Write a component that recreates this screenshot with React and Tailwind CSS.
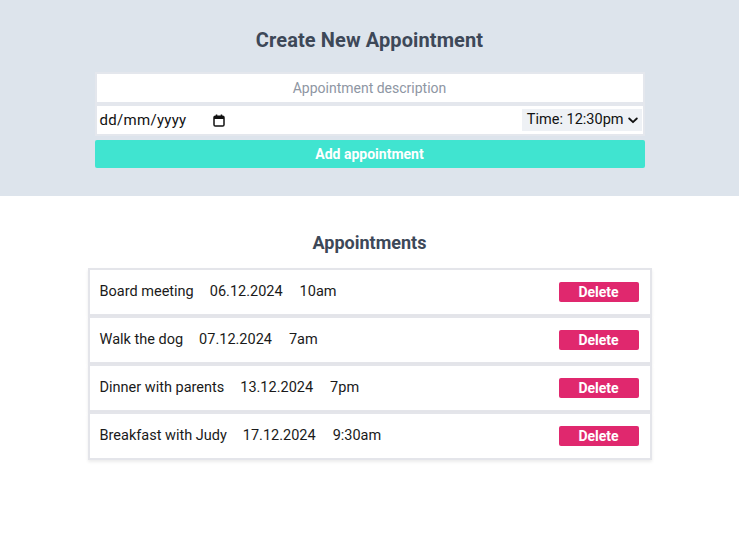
const appointments = [
  { id: 1, title: 'Board meeting', date: '06.12.2024', time: '10am' },
  { id: 2, title: 'Walk the dog', date: '07.12.2024', time: '7am' },
  { id: 3, title: 'Dinner with parents', date: '13.12.2024', time: '7pm' },
  { id: 4, title: 'Breakfast with Judy', date: '17.12.2024', time: '9:30am' }
]

const CalendarIcon = () => (
  <svg width="12" height="13" viewBox="0 0 12 13" fill="none" className="ml-[26px]">
    <rect x="1" y="2.2" width="10" height="9.8" rx="1.3" stroke="#111" strokeWidth="1.5" />
    <rect x="1" y="2.2" width="10" height="2.8" fill="#111" />
    <rect x="2.8" y="0.5" width="1.5" height="2.6" fill="#111" />
    <rect x="7.7" y="0.5" width="1.5" height="2.6" fill="#111" />
  </svg>
)

const ChevronDown = () => (
  <svg width="10" height="7" viewBox="0 0 10 7" fill="none" className="ml-[4px]">
    <path d="M1.2 1.5 5 5.2 8.8 1.5" stroke="#111" strokeWidth="1.8" strokeLinecap="round" strokeLinejoin="round" />
  </svg>
)

const App = () => {
  return (
    <div className="min-h-[536px] bg-white font-['Roboto',sans-serif]">
      <section className="flex h-[196px] flex-col items-center bg-[#dde4ec] pt-[26px]">
        <h1 className="text-[20px] font-bold leading-[28px] tracking-[0.1px] text-[#3d4858]">Create New Appointment</h1>
        <div className="mt-[18px] flex w-[550px] flex-col">
          <div className="flex h-[32px] items-center justify-center border-2 border-[#e4e7ed] bg-white text-[14px] text-[#8e96a3]">
            Appointment description
          </div>
          <div className="flex h-[32px] items-center border-2 border-[#e4e7ed] bg-white pl-[3px] pr-[1px]">
            <span className="text-[15px] tracking-[0.3px] text-[#111]">dd/mm/yyyy</span>
            <CalendarIcon />
            <div className="ml-auto flex h-[22px] items-center bg-[#eef1f5] pl-[5px] pr-[4px] text-[14.5px] text-[#111]">
              Time: 12:30pm
              <ChevronDown />
            </div>
          </div>
          <button className="mt-[4px] h-[28px] w-full rounded-[2px] bg-[#40e4d0] text-[14px] font-bold text-white">
            Add appointment
          </button>
        </div>
      </section>

      <section className="flex flex-col items-center pt-[35px]">
        <h2 className="text-[18px] font-bold leading-[24px] text-[#3d4858]">Appointments</h2>
        <ul className="mt-[13px] w-[564px]">
          {appointments.map((item) => (
            <li
              key={item.id}
              className="flex h-[48px] items-center border-2 border-[#e4e5ea] bg-white pl-[10px] pr-[11px] text-[14.5px] text-[#1a1a1a] shadow-[0_2px_3px_rgba(0,0,0,0.08)]"
            >
              <span>{item.title}</span>
              <span className="ml-[16px]">{item.date}</span>
              <span className="ml-[17px]">{item.time}</span>
              <button className="ml-auto h-[20px] w-[80px] rounded-[2px] bg-[#e0286e] text-[14px] font-bold leading-[20px] text-white">
                Delete
              </button>
            </li>
          ))}
        </ul>
      </section>
    </div>
  )
}

export default App
